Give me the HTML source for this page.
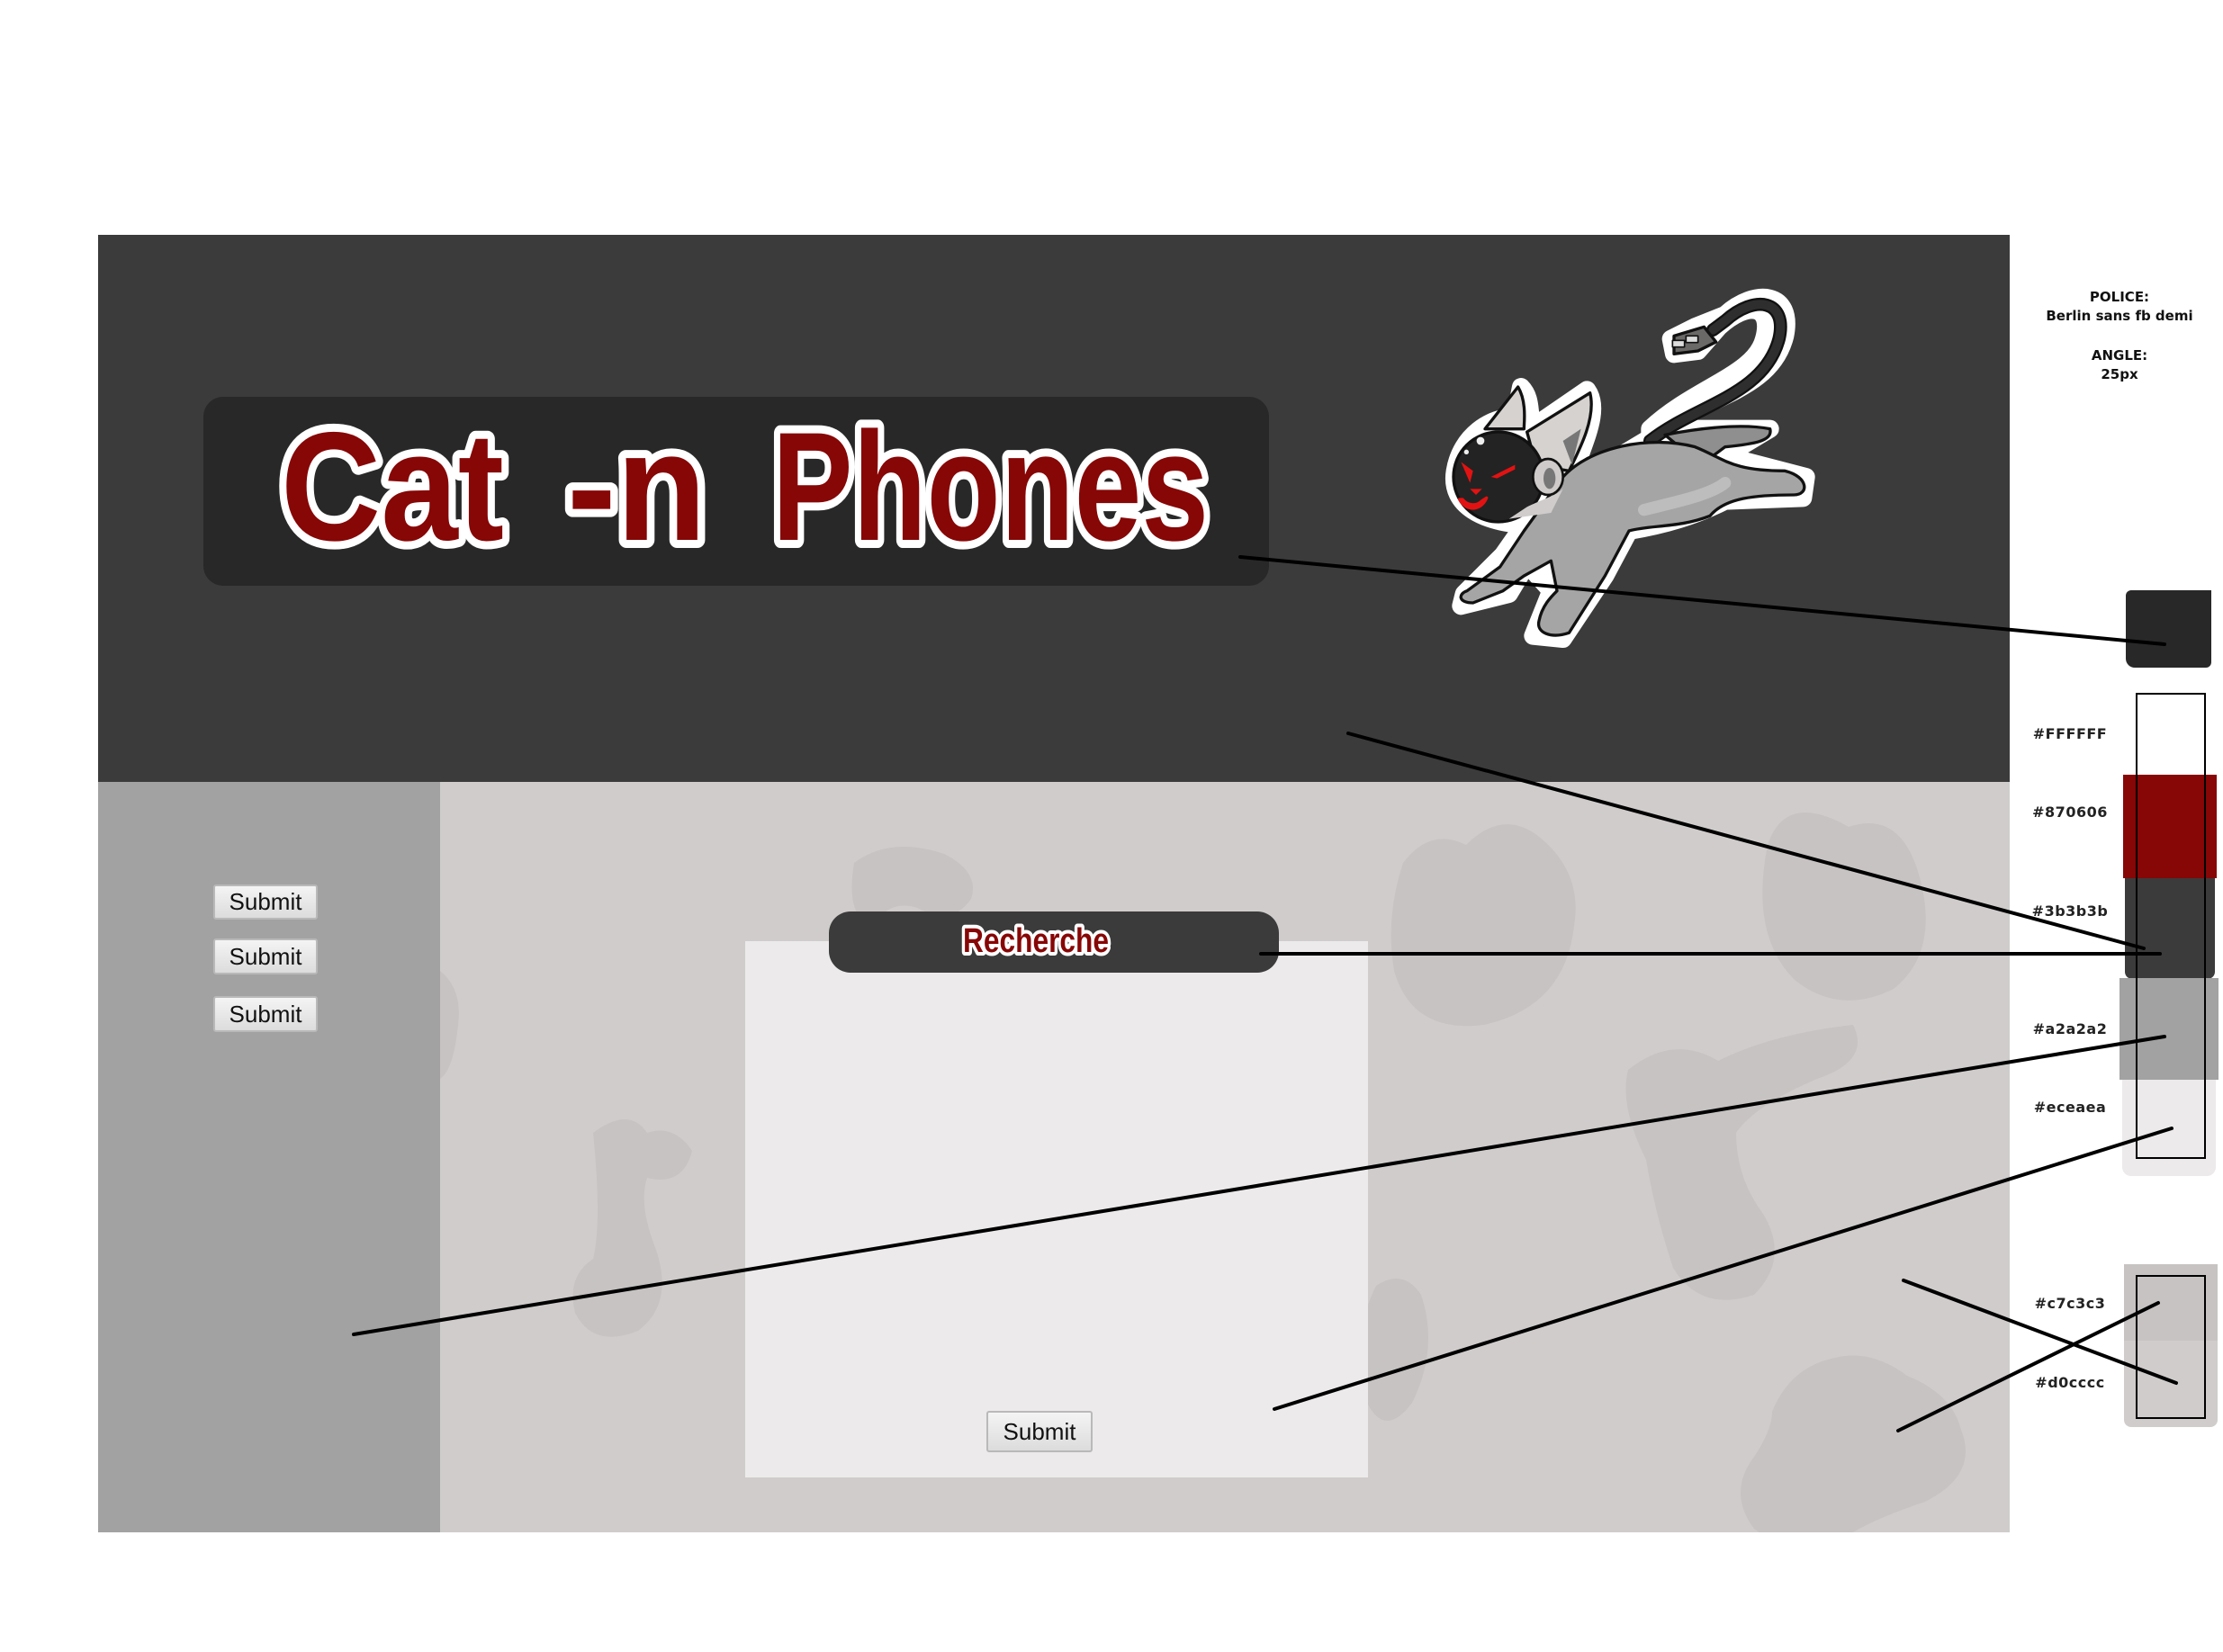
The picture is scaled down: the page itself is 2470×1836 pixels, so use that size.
<!DOCTYPE html>
<html><head><meta charset="utf-8">
<style>
html,body{margin:0;padding:0;background:#fff;}
body{width:2470px;height:1836px;position:relative;overflow:hidden;font-family:"Liberation Sans",sans-serif;}
.abs{position:absolute;}
.btn{position:absolute;box-sizing:border-box;border:2px solid #b9b9b9;border-radius:3px;background:linear-gradient(#f4f4f4,#dcdcdc);font:26px "Liberation Sans",sans-serif;color:#111;text-align:center;}
.lbl{position:absolute;width:120px;text-align:center;font:bold 16px "DejaVu Sans","Liberation Sans",sans-serif;color:#222;letter-spacing:0.5px;}
</style></head><body>
<!-- header -->
<div class="abs" style="left:109px;top:261px;width:2124px;height:608px;background:#3b3b3b;"></div>
<!-- content -->
<div class="abs" style="left:109px;top:869px;width:2124px;height:834px;background:#d0cccc;overflow:hidden;">
 <svg width="2124" height="834" style="position:absolute;left:0;top:0">
  <g fill="#c7c3c3">
   <path d="M840 90 q40-30 100 -10 q40 20 30 50 q-20 30 -60 10 q-30 -10 -50 20 q-30 -10 -20 -70z"/>
   <path d="M1450 90 q30-40 70-20 q40-40 80-10 q50 40 40 100 q-10 90 -100 110 q-80 10 -100 -60 q-10 -60 10 -120z"/>
   <path d="M1855 70 q20-60 90 -20 q60 -20 80 60 q20 80 -30 120 q-60 30 -110 -10 q-50 -50 -30 -150z"/>
   <path d="M550 390 q40-30 60 0 q30 -10 50 20 q-10 40 -50 30 q-10 30 10 80 q20 60 -20 90 q-50 20 -70 -20 q-10 -40 20 -60 q10 -40 0 -140z"/>
   <path d="M1700 320 q50-40 100 -10 q60 -30 150 -40 q20 40 -40 60 q-70 30 -90 60 q0 50 30 90 q30 50 -10 90 q-60 20 -90 -30 q-20 -60 -30 -120 q-30 -60 -20 -100z"/>
   <path d="M1420 560 q30-20 50 10 q20 60 -10 120 q-30 40 -50 0 q-20 -70 10 -130z"/>
   <path d="M1860 700 q20-50 70-60 q40 -10 80 20 q50 20 60 60 q20 50 -40 80 q-60 20 -90 40 q-60 20 -100 -10 q-30 -40 0 -80 q20 -30 20 -50z"/>
   <path d="M380 210 q25 20 20 60 q-5 50 -20 60z"/>
  </g>
 </svg>
</div>
<!-- sidebar -->
<div class="abs" style="left:109px;top:869px;width:380px;height:834px;background:#a2a2a2;"></div>
<div class="btn" style="left:237px;top:983px;width:116px;height:39px;line-height:35px;">Submit</div>
<div class="btn" style="left:237px;top:1043px;width:116px;height:40px;line-height:36px;">Submit</div>
<div class="btn" style="left:237px;top:1107px;width:116px;height:40px;line-height:36px;">Submit</div>
<!-- panel -->
<div class="abs" style="left:828px;top:1046px;width:692px;height:596px;background:#eceaea;"></div>
<div class="btn" style="left:1096px;top:1568px;width:118px;height:46px;line-height:42px;">Submit</div>
<div class="abs" style="left:921px;top:1013px;width:500px;height:68px;background:#3b3b3b;border-radius:24px;"></div>
<svg class="abs" style="left:0;top:0" width="2470" height="1836">
 <text x="1070" y="1058" textLength="162" lengthAdjust="spacingAndGlyphs" font-family="Liberation Sans" font-weight="bold" font-size="38" fill="#870606" stroke="#fff" stroke-width="8" stroke-linejoin="round" paint-order="stroke">Recherche</text>
</svg>
<!-- title box -->
<div class="abs" style="left:226px;top:441px;width:1184px;height:210px;background:#282828;border-radius:22px;"></div>
<svg class="abs" style="left:0;top:0" width="2470" height="1836">
 <g font-family="Liberation Sans" font-weight="bold" font-size="172" fill="#870606" stroke="#fff" stroke-width="18" stroke-linejoin="round" paint-order="stroke">
  <text x="312" y="600" textLength="248" lengthAdjust="spacingAndGlyphs">Cat</text>
  <text x="630" y="600" textLength="155" lengthAdjust="spacingAndGlyphs">-n</text>
  <text x="858" y="600" textLength="485" lengthAdjust="spacingAndGlyphs">Phones</text>
 </g>
</svg>
<!-- cat -->
<svg class="abs" style="left:1550px;top:290px" width="500" height="460" viewBox="0 0 1500 1380">
 <g stroke-linejoin="round" stroke-linecap="round">
  <!-- white outline layer -->
  <g stroke="#fff" stroke-width="60" fill="#fff">
   <path d="M850 600 C1000 450 1250 450 1300 250 C1330 100 1200 90 1100 180 L1000 220 L920 260 L930 310 L1010 300 L1080 220 C1180 130 1260 150 1230 260 C1200 380 1000 420 850 560Z"/>
   <path d="M200 700 C220 580 320 520 400 520 L420 420 C470 470 430 550 480 540 L640 430 C690 500 620 620 600 700 L750 650 L900 560 L1250 560 L1100 650 L1370 720 L1360 790 L1100 800 C1000 850 900 880 780 900 L700 1050 L560 1260 L460 1250 L520 1100 L440 1010 L380 1110 L220 1150 L230 1110 L360 980 L430 880 C300 870 180 820 200 700Z"/>
  </g>
  <!-- tail -->
  <path d="M850 600 C1000 480 1230 450 1280 260 C1310 130 1200 110 1100 200 L1060 230" fill="none" stroke="#111" stroke-width="44"/>
  <path d="M850 600 C1000 480 1230 450 1280 260 C1310 130 1200 110 1100 200 L1060 230" fill="none" stroke="#2e2e2e" stroke-width="30"/>
  <path d="M930 250 L1030 220 L1070 270 L1010 300 L930 310Z" fill="#6b6868" stroke="#111" stroke-width="10"/>
  <rect x="925" y="265" width="40" height="22" fill="#ddd" stroke="#111" stroke-width="5"/>
  <rect x="970" y="250" width="40" height="22" fill="#ddd" stroke="#111" stroke-width="5"/>
  <!-- back leg -->
  <path d="M900 580 C1000 560 1150 540 1250 560 C1260 600 1200 610 1100 620 L1020 680Z" fill="#8f8f8f" stroke="#111" stroke-width="10"/>
  <!-- body -->
  <path d="M560 720 C650 620 850 580 1000 620 C1100 660 1120 700 1300 700 C1380 720 1380 780 1330 780 C1200 780 1100 790 1050 850 C950 890 850 880 780 900 L700 1050 L580 1240 C520 1260 470 1240 480 1200 C490 1150 520 1120 540 1100 L520 1000 L430 1050 L360 1100 L260 1140 C210 1140 210 1110 240 1100 L350 1020 L430 900 Z" fill="#a5a5a5" stroke="#111" stroke-width="10"/>
  <path d="M830 830 C950 800 1050 780 1100 740" fill="none" stroke="#bdbdbd" stroke-width="40"/>
  <!-- ears -->
  <path d="M300 560 L410 420 C440 470 430 540 430 560Z" fill="#d6d2d0" stroke="#111" stroke-width="10"/>
  <path d="M440 570 L650 440 C670 520 620 620 580 700 L470 680Z" fill="#d6d2d0" stroke="#111" stroke-width="10"/>
  <path d="M560 600 L620 560 L590 680Z" fill="#777"/>
  <!-- head -->
  <ellipse cx="345" cy="720" rx="150" ry="150" fill="#232323" stroke="#111" stroke-width="10"/>
  <path d="M440 820 C480 800 540 780 560 760 L520 840 L380 860Z" fill="#d0cccc"/>
  <ellipse cx="510" cy="720" rx="50" ry="60" fill="#cfcbca" stroke="#111" stroke-width="8"/>
  <ellipse cx="515" cy="725" rx="20" ry="35" fill="#777"/>
  <circle cx="285" cy="600" r="13" fill="#eee"/>
  <circle cx="238" cy="637" r="8" fill="#eee"/>
  <path d="M320 720 L400 680 L400 695 L340 725Z" fill="#e31212"/>
  <path d="M220 670 L260 700 L250 740 Z" fill="#e31212"/>
  <path d="M250 760 L290 760 L270 780Z" fill="#e31212"/>
  <path d="M215 795 C240 840 290 830 305 790 L290 800 C270 820 240 815 225 795Z" fill="#e31212" stroke="#e31212" stroke-width="10"/>
 </g>
</svg>
<!-- legend -->
<div class="abs" style="left:2255px;top:320px;width:200px;text-align:center;font:bold 15px 'DejaVu Sans',sans-serif;color:#111;line-height:21px;">POLICE:<br>Berlin sans fb demi<br><div style="height:23px"></div>ANGLE:<br>25px</div>
<div class="abs" style="left:2362px;top:656px;width:95px;height:86px;background:#282828;border-radius:6px 0 6px 10px;"></div>
<div class="abs" style="left:2359px;top:861px;width:104px;height:115px;background:#870606;"></div>
<div class="abs" style="left:2361px;top:976px;width:100px;height:112px;background:#3b3b3b;border-radius:0 0 8px 8px;"></div>
<div class="abs" style="left:2355px;top:1087px;width:110px;height:113px;background:#a2a2a2;"></div>
<div class="abs" style="left:2358px;top:1200px;width:104px;height:107px;background:#eceaea;border-radius:0 0 10px 10px;"></div>
<div class="abs" style="left:2373px;top:770px;width:78px;height:518px;border:2px solid #000;box-sizing:border-box;"></div>
<div class="abs" style="left:2360px;top:1405px;width:104px;height:85px;background:#c7c3c3;"></div>
<div class="abs" style="left:2360px;top:1490px;width:104px;height:96px;background:#d0cccc;border-radius:0 0 8px 8px;"></div>
<div class="abs" style="left:2373px;top:1417px;width:78px;height:160px;border:2px solid #000;box-sizing:border-box;"></div>
<div class="lbl" style="left:2240px;top:806px;">#FFFFFF</div>
<div class="lbl" style="left:2240px;top:893px;">#870606</div>
<div class="lbl" style="left:2240px;top:1003px;">#3b3b3b</div>
<div class="lbl" style="left:2240px;top:1134px;">#a2a2a2</div>
<div class="lbl" style="left:2240px;top:1221px;">#eceaea</div>
<div class="lbl" style="left:2240px;top:1439px;">#c7c3c3</div>
<div class="lbl" style="left:2240px;top:1527px;">#d0cccc</div>
<!-- lines -->
<svg class="abs" style="left:0;top:0" width="2470" height="1836">
 <g stroke="#000" stroke-width="4" stroke-linecap="round">
  <line x1="1378" y1="619" x2="2405" y2="716"/>
  <line x1="1498" y1="815" x2="2382" y2="1054"/>
  <line x1="1401" y1="1060" x2="2400" y2="1060"/>
  <line x1="393" y1="1483" x2="2405" y2="1152"/>
  <line x1="1416" y1="1566" x2="2413" y2="1254"/>
  <line x1="2115" y1="1423" x2="2418" y2="1537"/>
  <line x1="2109" y1="1590" x2="2398" y2="1448"/>
 </g>
</svg>
</body></html>
